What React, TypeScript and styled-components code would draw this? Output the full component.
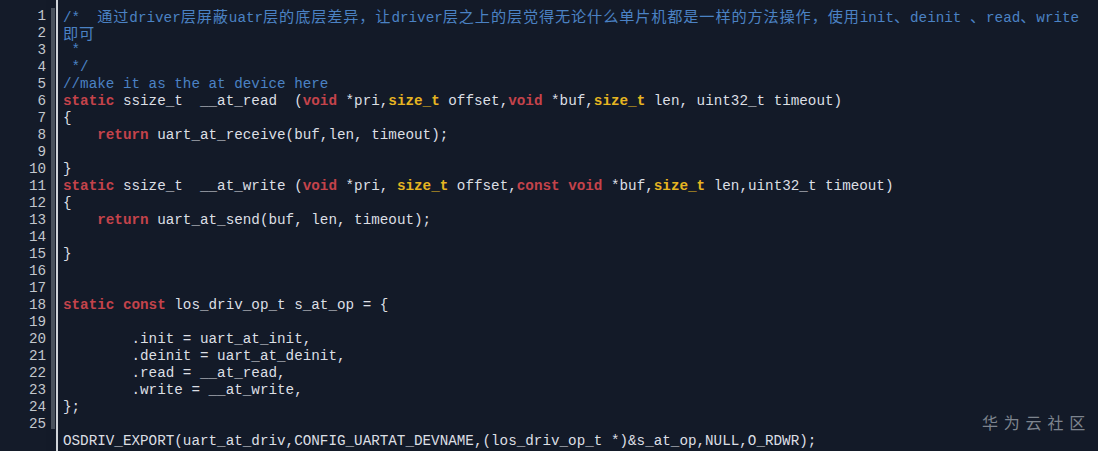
import React from "react";
import styled, { createGlobalStyle } from "styled-components";

const Global = createGlobalStyle`
  html, body { margin: 0; padding: 0; background: #131a28; }
  #root { width: 1098px; height: 451px; }
`;

const Editor = styled.div`
  position: relative;
  display: flex;
  width: 1098px;
  height: 451px;
  overflow: hidden;
  background: #131a28;
  font-family: "Liberation Mono", "DejaVu Sans Mono", monospace;
  font-size: 14.28px;
  color: #dcdfe4;
`;

const Gutter = styled.div`
  width: 46px;
  padding-top: 7.5px;
  display: flex;
  flex-direction: column;
  align-items: flex-end;
  background: #141b29;
  color: #c3c7cd;
`;

const Num = styled.div`
  height: 17px;
  line-height: 17px;
`;

const Bar = styled.div`
  width: 4px;
  margin-left: 5px;
  margin-top: 8px;
  height: 421px;
  background: #4a525d;
`;

const Rule = styled.div`
  width: 2px;
  height: 100%;
  margin-left: 1px;
  background: #cfd3d8;
`;

const Code = styled.div`
  padding-top: 7.5px;
  padding-left: 5px;
  display: flex;
  flex-direction: column;
`;

const Line = styled.div`
  height: 17px;
  line-height: 17px;
  white-space: pre;
`;

const Cm = styled.span`
  color: #4b82c4;
`;

const Cjk = styled.span`
  font-family: "Noto Sans CJK SC", sans-serif;
  font-size: 15.2px;
  letter-spacing: 0.85px;
  line-height: 15px;
`;

const Kw = styled.span`
  color: #c4434b;
  font-weight: bold;
`;

const Ty = styled.span`
  color: #e6b521;
  font-weight: bold;
`;

const Mark = styled.div`
  position: absolute;
  right: 7px;
  bottom: 17px;
  font-family: "Noto Sans CJK SC", sans-serif;
  font-size: 16px;
  letter-spacing: 5.8px;
  color: #7d848e;
`;

export default function App() {
  const nums = Array.from({ length: 25 }, (_, i) => i + 1);
  return (
    <>
      <Global />
      <Editor>
        <Gutter>
          {nums.map((n) => (
            <Num key={n}>{n}</Num>
          ))}
        </Gutter>
        <Bar />
        <Rule />
        <Code>
          <Line>
            <Cm>
              {"/*  "}
              <Cjk>通过</Cjk>driver<Cjk>层屏蔽</Cjk>uatr<Cjk>层的底层差异，让</Cjk>driver
              <Cjk>层之上的层觉得无论什么单片机都是一样的方法操作，使用</Cjk>init<Cjk>、</Cjk>deinit <Cjk>、</Cjk>read<Cjk>、</Cjk>write
            </Cm>
          </Line>
          <Line>
            <Cm>
              <Cjk>即可</Cjk>
            </Cm>
          </Line>
          <Line>
            <Cm>{" *"}</Cm>
          </Line>
          <Line>
            <Cm>{" */"}</Cm>
          </Line>
          <Line>
            <Cm>//make it as the at device here</Cm>
          </Line>
          <Line>
            <Kw>static</Kw>{" ssize_t  __at_read  ("}<Kw>void</Kw>{" *pri,"}<Ty>size_t</Ty>{" offset,"}<Kw>void</Kw>{" *buf,"}<Ty>size_t</Ty>{" len, uint32_t timeout)"}
          </Line>
          <Line>{"{"}</Line>
          <Line>
            {"    "}<Kw>return</Kw>{" uart_at_receive(buf,len, timeout);"}
          </Line>
          <Line>{""}</Line>
          <Line>{"}"}</Line>
          <Line>
            <Kw>static</Kw>{" ssize_t  __at_write ("}<Kw>void</Kw>{" *pri, "}<Ty>size_t</Ty>{" offset,"}<Kw>const</Kw>{" "}<Kw>void</Kw>{" *buf,"}<Ty>size_t</Ty>{" len,uint32_t timeout)"}
          </Line>
          <Line>{"{"}</Line>
          <Line>
            {"    "}<Kw>return</Kw>{" uart_at_send(buf, len, timeout);"}
          </Line>
          <Line>{""}</Line>
          <Line>{"}"}</Line>
          <Line>{""}</Line>
          <Line>{""}</Line>
          <Line>
            <Kw>static</Kw>{" "}<Kw>const</Kw>{" los_driv_op_t s_at_op = {"}
          </Line>
          <Line>{""}</Line>
          <Line>{"        .init = uart_at_init,"}</Line>
          <Line>{"        .deinit = uart_at_deinit,"}</Line>
          <Line>{"        .read = __at_read,"}</Line>
          <Line>{"        .write = __at_write,"}</Line>
          <Line>{"};"}</Line>
          <Line>{""}</Line>
          <Line>{"OSDRIV_EXPORT(uart_at_driv,CONFIG_UARTAT_DEVNAME,(los_driv_op_t *)&s_at_op,NULL,O_RDWR);"}</Line>
        </Code>
        <Mark>华为云社区</Mark>
      </Editor>
    </>
  );
}
